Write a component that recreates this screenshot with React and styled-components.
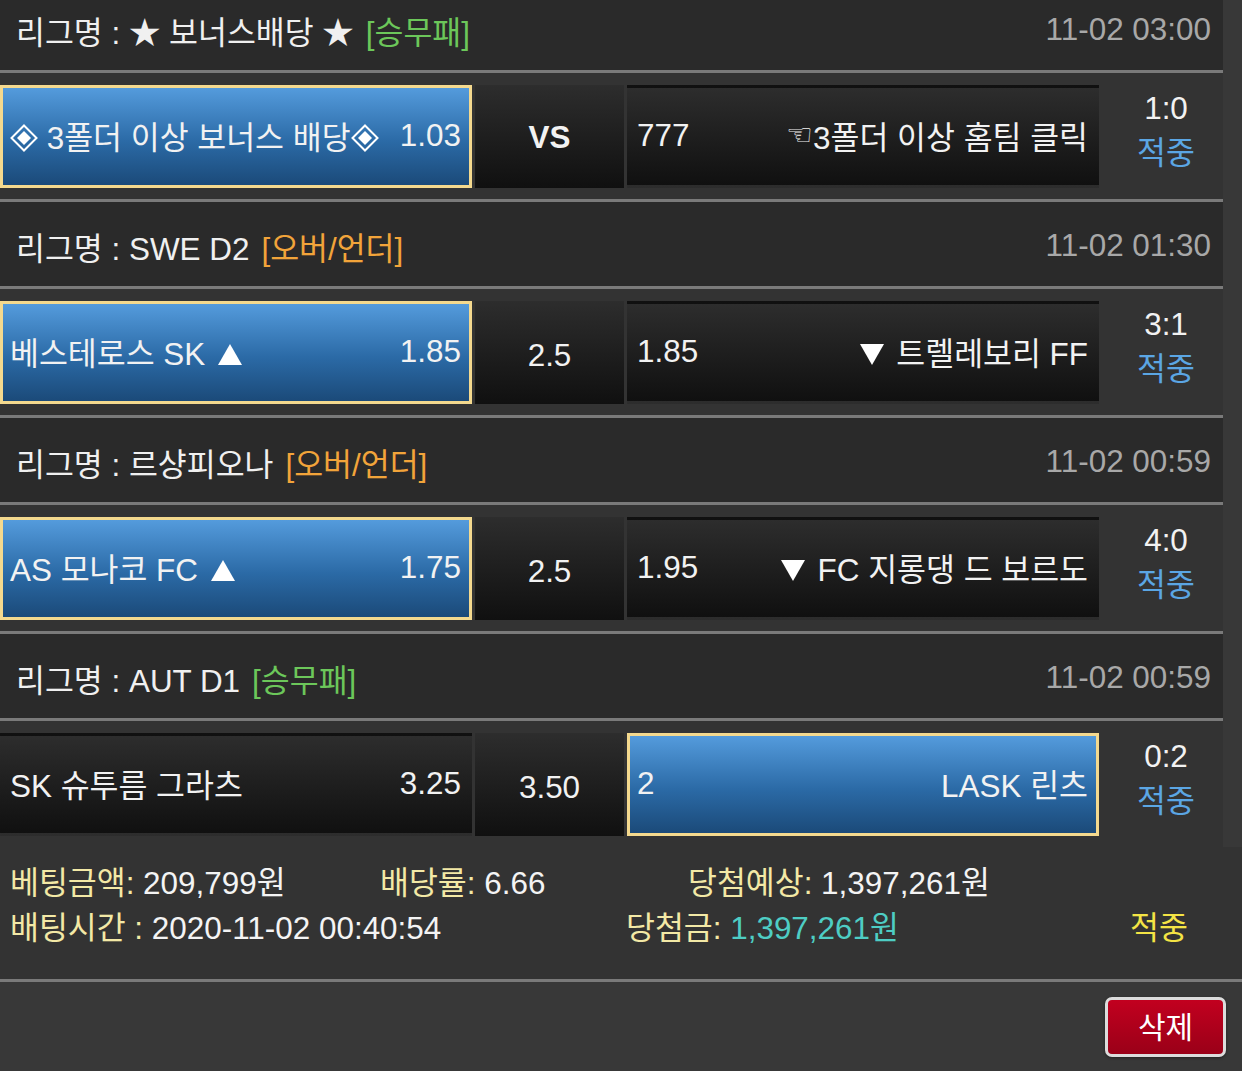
import React from "react";
import styled, { createGlobalStyle } from "styled-components";

const GlobalStyle = createGlobalStyle`
    html, body {
        margin: 0;
        padding: 0;
        background-color: #383838;
    }
    body {
        font-family: "Liberation Sans", Arial, "Noto Sans CJK KR", sans-serif;
        font-size: 32px;
        font-size-adjust: 0.519;
        color: #f2f2f2;
        overflow: hidden;
    }
`;

const Page = styled.div`
    margin-top: -17px;
    min-height: 1100px;
`;

const List = styled.div`
    width: 1223px;
`;

const LeagueHeader = styled.div`
    align-items: center;
    background-color: #2a2a2a;
    border-bottom: 3px solid #7a7a7a;
    border-top: 3px solid #7a7a7a;
    box-sizing: border-box;
    display: flex;
    height: 90px;
    justify-content: space-between;
    padding: 4px 10px 0 16px;
`;

const LeagueName = styled.span`
    color: #f0f0f0;
    white-space: nowrap;
`;

const Tag = styled.span`
    color: ${(p) => (p.$kind === "ou" ? "#f2a43a" : "#6cc75a")};
    margin-left: 12px;
`;

const Time = styled.span`
    color: #a8a8a8;
    margin-right: 2px;
`;

const MatchRow = styled.div`
    background-color: #333;
    box-sizing: border-box;
    display: flex;
    height: 126px;
    padding: 12px 0 11px;
`;

const Pick = styled.div`
    align-items: center;
    background: ${(p) =>
        p.$selected
            ? "linear-gradient(to bottom, #549bdc, #2b6aa6 55%, #1b4a79)"
            : "linear-gradient(to bottom, #2d2d2d, #101010)"};
    border: 3px solid ${(p) => (p.$selected ? "#f4d98e" : "transparent")};
    box-sizing: border-box;
    display: flex;
    flex: 0 0 472px;
    justify-content: space-between;
    padding: 0 8px 2px 7px;
    white-space: nowrap;
`;

const Middle = styled.div`
    align-items: center;
    background: linear-gradient(to bottom, #2d2d2d, #101010);
    box-sizing: border-box;
    display: flex;
    flex: 0 0 149px;
    font-weight: ${(p) => (p.$bold ? 700 : 400)};
    justify-content: center;
    margin: 0 3px;
    padding-top: ${(p) => (p.$bold ? "2px" : "6px")};
`;

const Glyph = styled.svg`
    display: inline-block;
    margin: ${(p) => p.$margin || "0"};
    vertical-align: ${(p) => p.$align || "0"};
`;

const Hand = styled.span`
    display: inline-block;
    font-family: "DejaVu Sans", sans-serif;
    font-size: 30px;
    font-size-adjust: none;
    transform: translateY(-4px);
`;

const Score = styled.div`
    align-items: center;
    display: flex;
    flex: 1;
    flex-direction: column;
    line-height: 45px;
    padding: 1px 0 0 10px;
`;

const Hit = styled.span`
    color: #5ba6e4;
`;

const Summary = styled.div`
    background-color: #333;
    border-bottom: 3px solid #7a7a7a;
    box-sizing: border-box;
    height: 135px;
    padding: 14px 0 0 10px;
`;

const SummaryLine = styled.div`
    display: grid;
    grid-template-columns: ${(p) => p.$cols};
    line-height: 45px;
    white-space: nowrap;
`;

const Label = styled.span`
    color: #f3e9a6;
`;

const Money = styled.span`
    color: ${(p) => (p.$win ? "#4ecdc4" : "#f4f4f4")};
`;

const Result = styled.span`
    color: #f4e445;
`;

const Footer = styled.div`
    display: flex;
    justify-content: flex-end;
    padding: 15px 16px 0 0;
`;

const DeleteButton = styled.button`
    background: linear-gradient(to bottom, #c2001f, #9a0018);
    border: 3px solid #dcdcdc;
    border-radius: 7px;
    box-shadow: 0 1px 3px rgba(0, 0, 0, 0.4);
    color: #fff;
    cursor: pointer;
    font-family: "Liberation Sans", "Noto Sans CJK KR", sans-serif;
    font-size: 30px;
    height: 60px;
    padding: 0 0 4px;
    width: 121px;
`;

function Up() {
    return (
        <Glyph width="24" height="21" viewBox="0 0 24 21" $margin="0 0 0 4px">
            <polygon points="12,0 24,21 0,21" fill="#fff" />
        </Glyph>
    );
}

function Down() {
    return (
        <Glyph width="24" height="21" viewBox="0 0 24 21" $margin="0 4px 0 0">
            <polygon points="0,0 24,0 12,21" fill="#fff" />
        </Glyph>
    );
}

function Diamond() {
    return (
        <Glyph width="28" height="28" viewBox="0 0 28 28" $align="-3px">
            <polygon points="14,1.5 26.5,14 14,26.5 1.5,14" fill="none" stroke="#fff" strokeWidth="2" />
            <polygon points="14,7 21,14 14,21 7,14" fill="#fff" />
        </Glyph>
    );
}

const games = [
    {
        league: "★ 보너스배당 ★",
        tag: "[승무패]",
        kind: "wdl",
        time: "11-02 03:00",
        home: <><Diamond /> 3폴더 이상 보너스 배당<Diamond /></>,
        homeOdds: "1.03",
        middle: "VS",
        awayOdds: "777",
        away: <><Hand>☜</Hand>3폴더 이상 홈팀 클릭</>,
        score: "1:0",
        pick: "home",
    },
    {
        league: "SWE D2",
        tag: "[오버/언더]",
        kind: "ou",
        time: "11-02 01:30",
        home: <>베스테로스 SK <Up /></>,
        homeOdds: "1.85",
        middle: "2.5",
        awayOdds: "1.85",
        away: <><Down /> 트렐레보리 FF</>,
        score: "3:1",
        pick: "home",
    },
    {
        league: "르샹피오나",
        tag: "[오버/언더]",
        kind: "ou",
        time: "11-02 00:59",
        home: <>AS 모나코 FC <Up /></>,
        homeOdds: "1.75",
        middle: "2.5",
        awayOdds: "1.95",
        away: <><Down /> FC 지롱댕 드 보르도</>,
        score: "4:0",
        pick: "home",
    },
    {
        league: "AUT D1",
        tag: "[승무패]",
        kind: "wdl",
        time: "11-02 00:59",
        home: "SK 슈투름 그라츠",
        homeOdds: "3.25",
        middle: "3.50",
        awayOdds: "2",
        away: "LASK 린츠",
        score: "0:2",
        pick: "away",
    },
];

export default function App() {
    return (
        <Page>
            <GlobalStyle />
            <List>
                {games.map((g, i) => (
                    <React.Fragment key={i}>
                        <LeagueHeader>
                            <LeagueName>
                                리그명 : {g.league}
                                <Tag $kind={g.kind}>{g.tag}</Tag>
                            </LeagueName>
                            <Time>{g.time}</Time>
                        </LeagueHeader>
                        <MatchRow>
                            <Pick $selected={g.pick === "home"}>
                                <span>{g.home}</span>
                                <span>{g.homeOdds}</span>
                            </Pick>
                            <Middle $bold={g.middle === "VS"}>{g.middle}</Middle>
                            <Pick $selected={g.pick === "away"}>
                                <span>{g.awayOdds}</span>
                                <span>{g.away}</span>
                            </Pick>
                            <Score>
                                <span>{g.score}</span>
                                <Hit>적중</Hit>
                            </Score>
                        </MatchRow>
                    </React.Fragment>
                ))}
            </List>
            <Summary>
                <SummaryLine $cols="370px 308px auto">
                    <span>
                        <Label>베팅금액:</Label> <Money>209,799원</Money>
                    </span>
                    <span>
                        <Label>배당률:</Label> <Money>6.66</Money>
                    </span>
                    <span>
                        <Label>당첨예상:</Label> <Money>1,397,261원</Money>
                    </span>
                </SummaryLine>
                <SummaryLine $cols="616px 504px auto">
                    <span>
                        <Label>배팅시간 :</Label> <Money>2020-11-02 00:40:54</Money>
                    </span>
                    <span>
                        <Label>당첨금:</Label> <Money $win>1,397,261원</Money>
                    </span>
                    <Result>적중</Result>
                </SummaryLine>
            </Summary>
            <Footer>
                <DeleteButton>삭제</DeleteButton>
            </Footer>
        </Page>
    );
}
